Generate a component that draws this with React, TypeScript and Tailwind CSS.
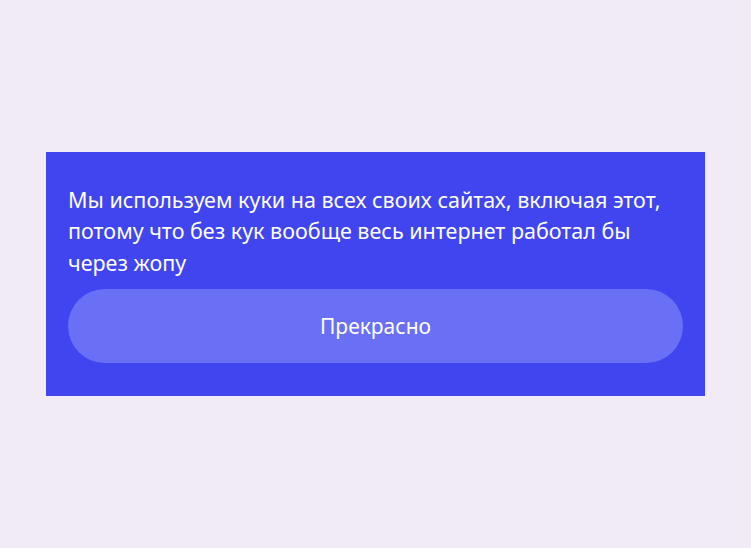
export default function App() {
  return (
    <div className="flex h-[548px] w-[751px] items-center justify-center bg-[#f0ebf5] font-['Noto_Sans',sans-serif]">
      <div className="w-[659px] bg-[#4045f0] px-[22px] pt-[32px] pb-[33px]">
        <p className="text-[21.5px] leading-[31.5px] text-white">
          Мы используем куки на всех своих сайтах, включая этот, потому что без кук вообще весь интернет работал бы через жопу
        </p>
        <button className="mt-[11px] flex h-[74px] w-full items-center justify-center rounded-full bg-[#6970f5] text-[21px] text-white">
          Прекрасно
        </button>
      </div>
    </div>
  );
}
